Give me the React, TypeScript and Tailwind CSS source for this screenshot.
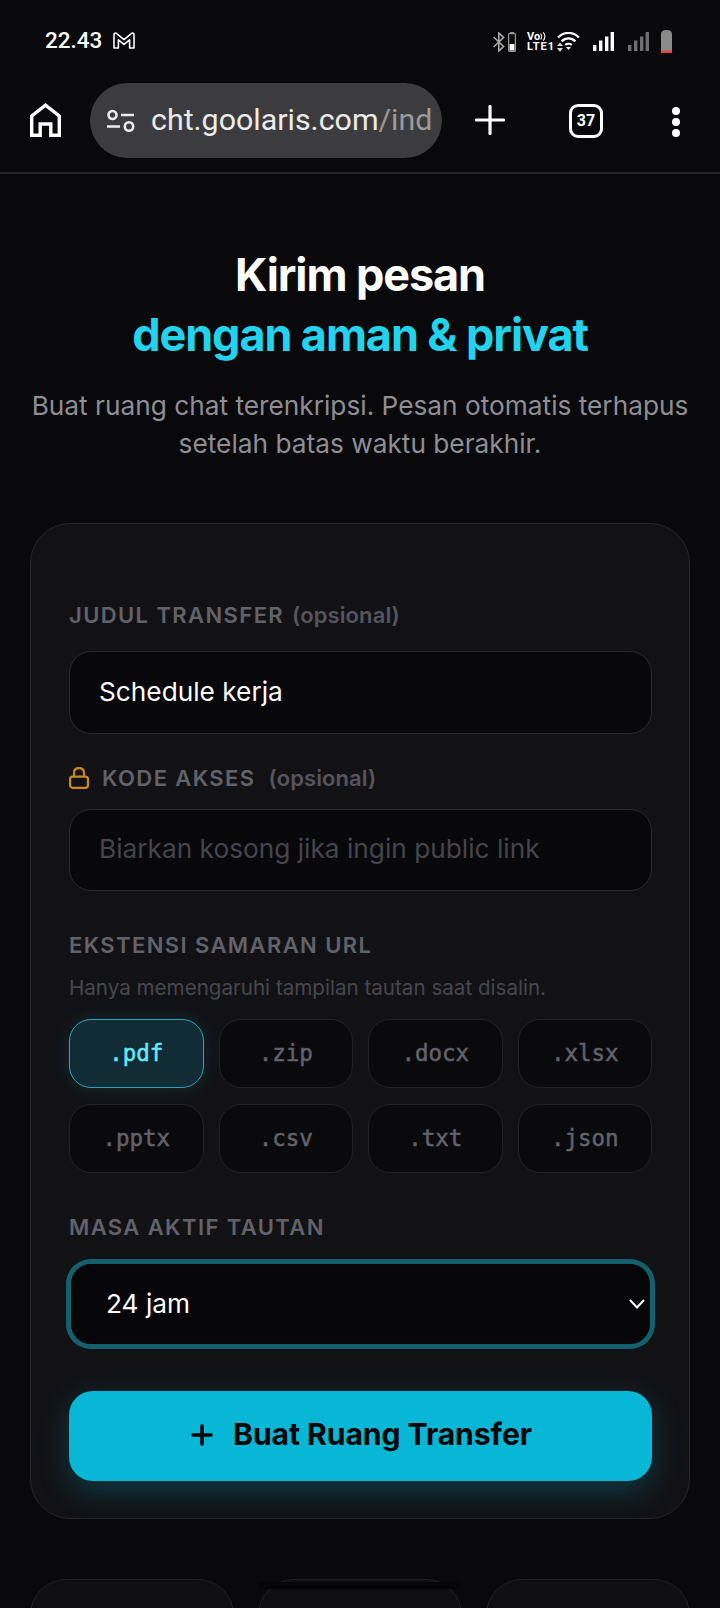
import React from 'react';

const extensions = ['.pdf', '.zip', '.docx', '.xlsx', '.pptx', '.csv', '.txt', '.json'];

function Signal({ color }: { color: string }) {
  return (
    <svg width="21" height="19" viewBox="0 0 21 19" fill={color}>
      <rect x="0" y="13" width="3.4" height="6" />
      <rect x="6" y="8.5" width="3.4" height="10.5" />
      <rect x="12" y="4.5" width="3.4" height="14.5" />
      <rect x="17.6" y="0" width="3.4" height="19" />
    </svg>
  );
}

function StatusBar() {
  return (
    <div className="h-[83px] flex items-start justify-between pl-[45px] pr-[48px] pt-[29px]">
      <div className="flex items-center gap-[11px] font-['Roboto',sans-serif] font-medium text-[22.5px] leading-[23px] text-white">
        <span>22.43</span>
        <svg width="22" height="17" viewBox="0 0 22 17" fill="none" stroke="white" strokeWidth="1.6" strokeLinejoin="round">
          <path d="M1 2.5 C1 1.3 2.4 0.6 3.4 1.4 L11 7.6 L18.6 1.4 C19.6 0.6 21 1.3 21 2.5 V16 H16.6 V7.8 L11 12.4 L5.4 7.8 V16 H1 Z" />
        </svg>
      </div>
      <div className="flex items-center pt-px">
        <svg width="12" height="20" viewBox="0 0 12 20" fill="none" stroke="#a8a8a8" strokeWidth="1.6">
          <path d="M0.6 5 L10.6 14.4 L5.8 19 V1 L10.6 5.6 L0.6 15" />
        </svg>
        <svg className="ml-[3px]" width="8" height="20" viewBox="0 0 8 20">
          <rect x="0.6" y="1.6" width="6.8" height="17.8" rx="1" fill="none" stroke="#9a9a9a" strokeWidth="1.2" />
          <rect x="2" y="0" width="4" height="1.6" fill="#9a9a9a" />
          <rect x="1.6" y="12" width="4.8" height="6.5" fill="white" />
        </svg>
        <div className="ml-[11px] w-[24px] font-['Roboto',sans-serif] font-bold text-[11px] leading-[10px] text-white">
          <div className="flex items-center">
            Vo
            <svg width="6" height="9" viewBox="0 0 6 9" fill="none" stroke="white" strokeWidth="1.1">
              <path d="M0.6 1.5 C2 3.4 2 5.6 0.6 7.5 M3.2 0.4 C5.4 3 5.4 6 3.2 8.6" />
            </svg>
          </div>
          <div className="tracking-[1px]">LTE1</div>
        </div>
        <svg className="ml-[6px]" width="23" height="20" viewBox="0 0 23 20" fill="none" stroke="white" strokeWidth="2.2">
          <path d="M1 5.6 C7 -0.6 16 -0.6 22 5.6" />
          <path d="M4.6 9.4 C8.6 5.4 14.4 5.4 18.4 9.4" />
          <path d="M8.2 13 C10 11.4 13 11.4 14.8 13" />
          <path d="M11.5 18 L9 15 H14 Z" fill="white" stroke="none" />
          <path d="M3 10.5 L6 14 H0 Z M3 20 L6 16 H0 Z" fill="#d8d8d8" stroke="none" />
        </svg>
        <div className="ml-[13px]">
          <Signal color="white" />
        </div>
        <div className="ml-[14px]">
          <Signal color="#6f6f6f" />
        </div>
        <svg className="ml-[12px]" width="11" height="23" viewBox="0 0 11 23">
          <path d="M0 4 C0 1.5 2 0 5.5 0 C9 0 11 1.5 11 4 V23 H0 Z" fill="#8a8a8a" />
          <rect x="0" y="20.5" width="11" height="2.5" fill="#e64545" />
        </svg>
      </div>
    </div>
  );
}

function Toolbar() {
  return (
    <div className="h-[91px] flex items-start border-b-2 border-[#26262a]">
      <div className="w-[90px] pl-[30px] pt-[20px]">
        <svg width="31" height="34" viewBox="0 0 31 34" fill="none" stroke="white" strokeWidth="3.4">
          <path d="M1.7 32.3 V13 L15.5 2.2 L29.3 13 V32.3 H20.8 V21 H10.2 V32.3 Z" />
        </svg>
      </div>
      <div className="w-[352px] h-[75px] rounded-full bg-[#3c3c3e] flex items-center pl-[16px] overflow-hidden">
        <svg width="30" height="24" viewBox="0 0 30 24" fill="none" stroke="#ececec" strokeWidth="2.6">
          <circle cx="6.5" cy="6" r="4" />
          <path d="M15 6 H28 M1 17.5 H14" />
          <circle cx="23" cy="17.5" r="4.2" />
        </svg>
        <span className="ml-[15px] font-['Roboto',sans-serif] text-[30.4px] leading-none text-[#ececec] whitespace-nowrap">
          cht.goolaris.com<span className="text-[#9b9b9b]">/ind</span>
        </span>
      </div>
      <div className="pl-[33px] pt-[22px]">
        <svg width="30" height="30" viewBox="0 0 30 30" fill="none" stroke="white" strokeWidth="3.2" strokeLinecap="round">
          <path d="M15 1.5 V28.5 M1.5 15 H28.5" />
        </svg>
      </div>
      <div className="ml-[64px] mt-[21px] w-[34px] h-[34px] rounded-[9px] border-[3px] border-white flex items-center justify-center font-['Roboto',sans-serif] font-bold text-[16px] text-white">
        37
      </div>
      <div className="ml-[69px] mt-[24px] flex flex-col gap-[3.5px]">
        <div className="w-[7.5px] h-[7.5px] rounded-full bg-white" />
        <div className="w-[7.5px] h-[7.5px] rounded-full bg-white" />
        <div className="w-[7.5px] h-[7.5px] rounded-full bg-white" />
      </div>
    </div>
  );
}

function Label({ children, className = '' }: { children: React.ReactNode; className?: string }) {
  return (
    <div className={`h-[30px] flex items-center text-[22px] font-semibold tracking-[1.4px] text-[#62626a] whitespace-nowrap ${className}`}>
      {children}
    </div>
  );
}

export default function App() {
  return (
    <div className="w-[720px] h-[1608px] overflow-hidden relative bg-[#09090b] font-['Inter',sans-serif]">
      <StatusBar />
      <Toolbar />

      <main className="px-[30px]">
        <div className="pt-[71px] text-center">
          <h1 className="text-[45px] leading-[60px] font-bold tracking-[-1.1px] text-white">
            Kirim pesan
            <br />
            <span className="text-[#22d3ee]">dengan aman &amp; privat</span>
          </h1>
          <p className="mt-[22px] text-[26.25px] leading-[38px] text-[#8e8e94] whitespace-nowrap">
            Buat ruang chat terenkripsi. Pesan otomatis terhapus
            <br />
            setelah batas waktu berakhir.
          </p>
        </div>

        <section className="mt-[60px] h-[996px] rounded-[40px] border border-[#26262a] bg-[#121215] pl-[38px] pr-[37px] pt-[76px]">
          <Label>
            JUDUL TRANSFER
            <span className="ml-[8px] font-semibold tracking-[0.1px] text-[#55555d]">(opsional)</span>
          </Label>
          <div className="mt-[21px] h-[83px] rounded-[22px] border border-[#2a2a2e] bg-[#08080a] flex items-center px-[30px] pb-[2px] text-[26.25px] text-white">
            <span className="-ml-px">Schedule kerja</span>
          </div>

          <Label className="mt-[29px]">
            <svg width="20" height="22" viewBox="0 0 20 22" fill="none" stroke="#c98a1e" strokeWidth="2.2">
              <rect x="1.1" y="9.6" width="17.8" height="11.2" rx="2.5" />
              <path d="M5 9.6 V6 C5 3 7 1.2 10 1.2 C13 1.2 15 3 15 6 V9.6" />
            </svg>
            <span className="ml-[13px]">KODE AKSES</span>
            <span className="ml-[13px] font-semibold tracking-[0.1px] text-[#55555d]">(opsional)</span>
          </Label>
          <div className="mt-[16px] h-[82px] rounded-[22px] border border-[#2a2a2e] bg-[#08080a] flex items-center px-[30px] pb-[2px] text-[26.25px] text-[#45454b]">
            <span className="-ml-px">Biarkan kosong jika ingin public link</span>
          </div>

          <Label className="mt-[39px]">EKSTENSI SAMARAN URL</Label>
          <div className="mt-[13px] h-[30px] flex items-center text-[20.6px] text-[#47474d] whitespace-nowrap">
            Hanya memengaruhi tampilan tautan saat disalin.
          </div>

          <div className="mt-[16px] grid grid-cols-4 gap-x-[15px] gap-y-[16px]">
            {extensions.map((ext) =>
              ext === '.pdf' ? (
                <div
                  key={ext}
                  className="h-[69px] pt-px rounded-[22px] border border-[#2aa3bb] bg-[#112c35] shadow-[0_0_18px_rgba(34,211,238,0.12)] flex items-center justify-center font-['DejaVu_Sans_Mono',monospace] font-normal [-webkit-text-stroke:0.5px_#67e8f9] text-[22.5px] text-[#67e8f9]"
                >
                  {ext}
                </div>
              ) : (
                <div
                  key={ext}
                  className="h-[69px] pt-px rounded-[22px] border border-[#232327] bg-[#0a0a0c] flex items-center justify-center font-['DejaVu_Sans_Mono',monospace] font-normal [-webkit-text-stroke:0.5px_#62626a] text-[22.5px] text-[#62626a]"
                >
                  {ext}
                </div>
              )
            )}
          </div>

          <Label className="mt-[39px]">MASA AKTIF TAUTAN</Label>
          <div className="mt-[20px] h-[84px] rounded-[22px] border-2 border-[#14606f] ring-[3px] ring-[#14606f] bg-[#060608] flex items-center justify-between pl-[35px] pr-[5px] text-[26.25px] text-white">
            24 jam
            <svg width="16" height="10" viewBox="0 0 16 10" fill="none" stroke="white" strokeWidth="2">
              <path d="M1 1 L8 8.5 L15 1" />
            </svg>
          </div>

          <button className="mt-[45px] w-full h-[90px] rounded-[24px] bg-[#08b6d6] shadow-[0_10px_30px_rgba(6,182,212,0.25)] flex items-center justify-center pb-[2px] pl-[2px] text-[30.2px] font-bold tracking-[-0.1px] text-[#060608]">
            <svg width="22" height="22" viewBox="0 0 22 22" fill="none" stroke="#060608" strokeWidth="3.6" strokeLinecap="round">
              <path d="M11 2 V20 M2 11 H20" />
            </svg>
            <span className="ml-[20px]">Buat Ruang Transfer</span>
          </button>
        </section>

        <div className="mt-[60px] grid grid-cols-3 gap-x-[24px]">
          <div className="h-[120px] rounded-[36px] border border-[#212125] bg-[#0f0f12]" />
          <div className="h-[120px] rounded-[36px] border border-[#212125] bg-[#0f0f12]" />
          <div className="h-[120px] rounded-[36px] border border-[#212125] bg-[#0f0f12]" />
        </div>
      </main>

      {/* gesture bar over the bottom cards */}
      <div className="absolute left-[258px] top-[1582px] w-[203px] h-[7px] rounded-full bg-[#060608]" />
    </div>
  );
}
